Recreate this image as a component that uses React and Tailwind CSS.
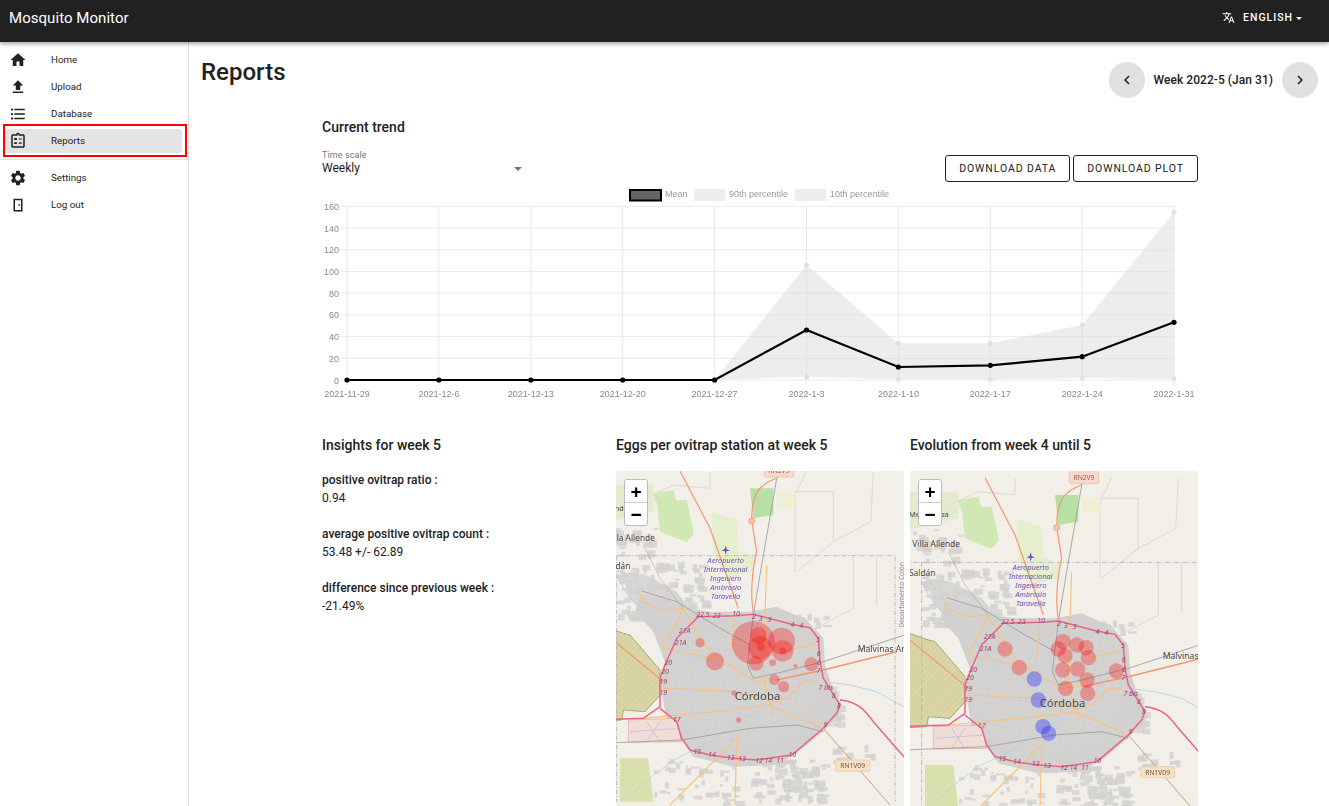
import React from 'react';

const P = {
  home: 'M10 20v-6h4v6h5v-8h3L12 3 2 12h3v8z',
  upload: 'M9 16h6v-6h4l-7-7-7 7h4zm-4 2h14v2H5z',
  list: 'M4 10.5c-.83 0-1.5.67-1.5 1.5s.67 1.5 1.5 1.5 1.5-.67 1.5-1.5-.67-1.5-1.5-1.5zm0-6c-.83 0-1.5.67-1.5 1.5S3.17 7.5 4 7.5 5.5 6.83 5.5 6 4.83 4.5 4 4.5zm0 12c-.83 0-1.5.68-1.5 1.5s.68 1.5 1.5 1.5 1.5-.68 1.5-1.5-.67-1.5-1.5-1.5zM7 19h14v-2H7v2zm0-6h14v-2H7v2zm0-8v2h14V5H7z',
  report: 'M19 3h-4.18C14.4 1.84 13.3 1 12 1s-2.4.84-2.82 2H5c-1.1 0-2 .9-2 2v14c0 1.1.9 2 2 2h14c1.1 0 2-.9 2-2V5c0-1.1-.9-2-2-2zm-7 0c.55 0 1 .45 1 1s-.45 1-1 1-1-.45-1-1 .45-1 1-1zm7 16H5V5h14v14zM13 8.5h4v1.5h-4zM13 14h4v1.5h-4zM7 8h3.5v2.5H7zM7 13.5h3.5V16H7z',
  settings: 'M19.14 12.94c.04-.3.06-.61.06-.94 0-.32-.02-.64-.07-.94l2.03-1.58c.18-.14.23-.41.12-.61l-1.92-3.32c-.12-.22-.37-.29-.59-.22l-2.39.96c-.5-.38-1.03-.7-1.62-.94l-.36-2.54c-.04-.24-.24-.41-.48-.41h-3.84c-.24 0-.43.17-.47.41l-.36 2.54c-.59.24-1.13.57-1.62.94l-2.39-.96c-.22-.08-.47 0-.59.22L2.74 8.87c-.12.21-.08.47.12.61l2.03 1.58c-.05.3-.09.63-.09.94s.02.64.07.94l-2.03 1.58c-.18.14-.23.41-.12.61l1.92 3.32c.12.22.37.29.59.22l2.39-.96c.5.38 1.03.7 1.62.94l.36 2.54c.05.24.24.41.48.41h3.84c.24 0 .44-.17.47-.41l.36-2.54c.59-.24 1.13-.56 1.62-.94l2.39.96c.22.08.47 0 .59-.22l1.92-3.32c.12-.22.07-.47-.12-.61l-2.01-1.58zM12 15.6c-1.98 0-3.6-1.62-3.6-3.6s1.62-3.6 3.6-3.6 3.6 1.62 3.6 3.6-1.62 3.6-3.6 3.6z',
  door: 'M6 3.5h12v17H6zM8 5.5v13h8v-13zM12.5 11h2v2h-2z',
  translate: 'm12.87 15.07-2.54-2.51.03-.03c1.74-1.94 2.98-4.17 3.71-6.53H17V4h-7V2H8v2H1v1.99h11.17C11.5 7.92 10.44 9.75 9 11.35 8.07 10.32 7.3 9.19 6.69 8h-2c.73 1.63 1.73 3.17 2.98 4.56l-5.09 5.02L4 19l5-5 3.11 3.11.76-2.04zM18.5 10h-2L12 22h2l1.12-3h4.75L21 22h2l-4.5-12zm-2.62 7 1.62-4.33L19.12 17h-3.24z',
  left: 'M15.41 7.41 14 6l-6 6 6 6 1.41-1.41L10.83 12z',
  right: 'M10 6 8.59 7.41 13.17 12l-4.58 4.59L10 18l6-6z',
};

function Icon({ d, size = 18, className = '' }) {
  return (
    <svg width={size} height={size} viewBox="0 0 24 24" fill="currentColor" fillRule="evenodd" className={className}>
      <path d={d} />
    </svg>
  );
}

const NAV_TOP = [
  { label: 'Home', icon: P.home },
  { label: 'Upload', icon: P.upload },
  { label: 'Database', icon: P.list },
];
const NAV_BOTTOM = [
  { label: 'Settings', icon: P.settings },
  { label: 'Log out', icon: P.door },
];

function NavRow({ item }) {
  return (
    <div className="flex h-[27px] items-center pl-[9px] text-[#212121]">
      <Icon d={item.icon} />
      <span className="ml-[24px] text-[9.75px] leading-none">{item.label}</span>
    </div>
  );
}

function Sidebar() {
  return (
    <aside className="w-[189px] shrink-0 border-r border-[#e0e0e0] pt-[4px]">
      {NAV_TOP.map((item) => <NavRow key={item.label} item={item} />)}
      <div className="mx-[3px] -mt-[3.5px] -mb-[3px] h-[33px] w-[184px] border-2 border-[#f00] py-[3px]">
        <div className="flex h-[24px] w-[177px] items-center rounded-[3px] bg-[#e4e4e4] text-[#212121]">
          <span className="ml-[4px]"><Icon d={P.report} /></span>
          <span className="ml-[24px] text-[9.75px] leading-none">Reports</span>
        </div>
      </div>
      <div className="mt-[5px] mb-[5px] h-px bg-[#e0e0e0]" />
      {NAV_BOTTOM.map((item) => <NavRow key={item.label} item={item} />)}
    </aside>
  );
}

// chart geometry, in page pixels minus the svg origin (322, 186)
const CX = [25, 116.9, 208.8, 300.7, 392.6, 484.5, 576.4, 668.3, 760.2, 852];
const Y_TICKS = [160, 140, 120, 100, 80, 60, 40, 20, 0];
const X_LABELS = ['2021-11-29', '2021-12-6', '2021-12-13', '2021-12-20', '2021-12-27', '2022-1-3', '2022-1-10', '2022-1-17', '2022-1-24', '2022-1-31'];
const MEAN = [194, 194, 194, 194, 194, 144, 181, 179.3, 170.7, 136.3];
const UPPER = [194, 194, 194, 194, 194, 79, 157.3, 157.3, 139, 26.3];
const LOWER = [194, 194, 194, 194, 194, 190.7, 193.3, 193.3, 192, 192.7];
const yFor = (t) => 194 - t * 1.085;

function TrendChart() {
  const upper = CX.map((x, i) => `${x},${UPPER[i]}`).join(' ');
  const lower = CX.map((x, i) => `${x},${LOWER[i]}`).reverse().join(' ');
  const mean = CX.map((x, i) => `${x},${MEAN[i]}`).join(' ');
  return (
    <svg width="876" height="220" viewBox="0 0 876 220" className="mt-[4px] blur-[0.4px]" style={{ fontFamily: '"Liberation Sans", Arial, sans-serif' }}>
      {/* legend */}
      <rect x="308" y="4" width="31" height="10.5" fill="#666" stroke="#000" strokeWidth="2" />
      <text x="343" y="11" fontSize="9" fill="#999">Mean</text>
      <rect x="372" y="3" width="31" height="12" fill="#eee" />
      <text x="407" y="11" fontSize="9" fill="#999">90th percentile</text>
      <rect x="473" y="3" width="31" height="12" fill="#eee" />
      <text x="508" y="11" fontSize="9" fill="#999">10th percentile</text>
      {/* grid */}
      {Y_TICKS.map((t) => (
        <g key={t}>
          <line x1="18" x2="853" y1={yFor(t)} y2={yFor(t)} stroke="#ececec" />
          <text x="17" y={yFor(t) + 3.5} fontSize="9" fill="#888" textAnchor="end">{t}</text>
        </g>
      ))}
      {CX.map((x, i) => (
        <g key={x}>
          <line x1={x} x2={x} y1="20.4" y2="199" stroke="#e8e8e8" />
          <text x={x} y="211" fontSize="9" fill="#888" textAnchor="middle">{X_LABELS[i]}</text>
        </g>
      ))}
      <polygon points={`${upper} ${lower}`} fill="#dcdcdc" fillOpacity="0.5" />
      {CX.slice(5).map((x, i) => (
        <g key={x} fill="#e0e0e0">
          <circle cx={x} cy={UPPER[i + 5]} r="2.5" />
          <circle cx={x} cy={LOWER[i + 5]} r="2.5" />
        </g>
      ))}
      <polyline points={mean} fill="none" stroke="#000" strokeWidth="2.2" />
      {CX.map((x, i) => <circle key={x} cx={x} cy={MEAN[i]} r="2.6" fill="#000" />)}
    </svg>
  );
}

const ROUTE_LABELS = [
  [270, 457, '22'], [292, 457, '5'], [320, 458, '23'], [378, 454, '10'], [432, 462, '2'], [452, 468, '3'], [478, 472, '3'],
  [547, 487, '4'], [574, 490, '4'], [624, 530, '5'], [626, 572, '6'], [627, 600, '6'], [625, 624, '7'], [647, 674, '7 bis'],
  [671, 698, '8'], [686, 728, '8'], [646, 787, '9'], [547, 875, '10'], [510, 895, '11'], [475, 895, '14'], [447, 894, '12'],
  [396, 888, '13'], [362, 884, '13'], [306, 876, '14'], [262, 867, '15'], [200, 770, '17'], [160, 690, '19'], [160, 658, '19'],
  [165, 626, '20'], [175, 600, '20'], [212, 539, '21A'], [224, 503, '21A'],
];

const AIRPORT_TEXT = [
  [347, 294, 'Aeropuerto'], [347, 321, 'Internacional'], [347, 348, 'Ingeniero'], [347, 375, 'Ambrosio'], [347, 402, 'Taravella'],
];

// scattered built-up blocks round the city, from a small fixed sequence
const BLOCKS = (() => {
  const out = [];
  let seed = 7;
  const next = () => {
    seed = (seed * 1103 + 12345) % 65536;
    return seed / 65536;
  };
  const zones = [
    [20, 290, 260, 170, 90], [250, 900, 130, 110, 22], [420, 880, 220, 130, 80], [130, 880, 120, 120, 18],
    [-30, 170, 190, 100, 24], [540, 440, 110, 60, 14], [640, 650, 60, 130, 14], [660, 840, 130, 50, 14],
  ];
  zones.forEach(([x, y, w, h, n]) => {
    for (let i = 0; i < n; i++) {
      out.push([x + next() * w, y + next() * h, 8 + next() * 22, 6 + next() * 16]);
    }
  });
  return out;
})();

function BaseMap({ uid, shortLabel }) {
  return (
    <g>
      <rect x="-60" y="-30" width="1000" height="1100" fill="#f2efe9" />
      {/* parcels */}
      <g fill="none" stroke="#d2cdc2" strokeWidth="2">
        <path d="M555,320 L555,80 L670,80 L670,230 L560,320 M670,230 L782,170 L790,20 M730,270 L730,430 L560,520 M800,270 L800,420 M560,80 L590,18 M18,140 L190,60 L300,70 M300,70 L300,20" />
      </g>
      {/* greens */}
      <path d="M140,110 L230,105 L252,205 L230,232 L150,200 Z M130,85 L190,75 L200,110 L135,110 Z" fill="#cfe8b4" />
      <path d="M420,70 L490,70 L490,150 L430,160 Z" fill="#b8e0a4" />
      <path d="M305,140 L380,165 L385,255 L440,280 L425,320 L350,340 L310,270 Z" fill="#e6efcd" />
      <path d="M500,80 L555,80 L555,125 L500,125 Z" fill="#eef0d4" />
      <path d="M30,880 L115,880 L130,1010 L30,1010 Z" fill="#d9e0ae" />
      <path d="M-40,60 L130,60 L130,140 L-40,180 Z" fill="#dfe8c0" fillOpacity="0.7" />
      {/* built up area */}
      <g fill="#d2d1cf">
        <path d="M90,390 L150,395 L230,430 L300,440 L420,440 L500,425 L590,465 L640,520 L645,600 L665,660 L695,720 L645,795 L560,865 L500,900 L370,905 L250,875 L215,825 L170,765 L150,650 L165,590 L130,500 L75,440 Z" />
        <path d="M30,320 L110,330 L200,380 L250,440 L180,480 L120,470 L60,400 Z" fillOpacity="0.8" />
        {BLOCKS.map(([x, y, w, h]) => <rect key={`${x}-${y}`} x={x} y={y} width={w} height={h} fillOpacity="0.8" />)}
      </g>
      <defs>
        <pattern id={`streets-${uid}`} width="20" height="20" patternUnits="userSpaceOnUse" patternTransform="rotate(12)">
          <path d="M0,0 H20 M0,0 V20" stroke="#dedcd9" strokeWidth="1.4" fill="none" />
        </pattern>
        <pattern id={`hatch-${uid}`} width="12" height="12" patternUnits="userSpaceOnUse" patternTransform="rotate(45)">
          <path d="M0,0 V12" stroke="#e4d8b4" strokeWidth="4" />
        </pattern>
      </defs>
      <path d="M170,590 L300,500 L600,500 L640,640 L560,820 L300,850 L200,760 Z" fill={`url(#streets-${uid})`} />
      {/* protected areas */}
      <path d="M-60,470 L40,505 L60,510 L150,615 L150,690 L105,740 L40,735 L35,765 L-60,770 Z" fill="#d6d2a2" stroke="#9aab6a" strokeWidth="3" />
      <path d="M-60,470 L40,505 L60,510 L150,615 L150,690 L105,740 L40,735 L35,765 L-60,770 Z" fill={`url(#hatch-${uid})`} />
      <path d="M55,765 L200,760 L215,830 L55,832 Z" fill="#f1dcd6" stroke="#e0a8a0" strokeWidth="2" />
      <path d="M110,770 L150,830 M150,770 L110,830 M60,800 L210,790" stroke="#aebcdc" strokeWidth="2" fill="none" />
      {/* rivers */}
      <g fill="none" stroke="#a9d3e6" strokeWidth="2.5">
        <path d="M18,330 L60,400 L110,440 L160,490 L210,540 L255,590" />
        <path d="M200,880 L300,830 L380,770 L450,740" />
        <path d="M640,650 L720,660 L800,680 L880,725" />
        <path d="M50,1000 L130,930 L200,880" />
      </g>
      {/* admin boundary */}
      <path d="M-60,272 H855 V1010 M20,272 V1010" fill="none" stroke="#bba8c4" strokeWidth="2.5" strokeDasharray="14 5 3 5" />
      {/* rails */}
      <g fill="none" stroke="#9b9b9b" strokeWidth="2.5">
        <path d="M502,30 L455,300 L430,450 L412,600 L430,640 L500,625 L640,590 L890,508" />
        <path d="M95,378 L200,410 L330,490 L420,540" />
        <path d="M-30,835 L215,825 L420,790 L560,780 L640,800" />
        <path d="M100,240 L150,340 L220,430" strokeWidth="1.5" />
      </g>
      {/* roads */}
      <g fill="none" stroke="#f8c27e" strokeWidth="3.5">
        <path d="M90,385 L95,410 L160,435 L220,430 L270,520 L310,570 L390,620 L440,650 L520,640" />
        <path d="M470,300 L465,450 L460,640 L490,750" />
        <path d="M160,670 L370,680 L490,710 L530,700 L580,650 L620,650" />
        <path d="M100,760 L370,735 L480,720 L640,790" />
        <path d="M180,1020 L380,820 L375,1020" />
        <path d="M520,560 L620,535 M220,430 L160,550 L310,580 M375,460 L365,560" />
      </g>
      <path d="M640,790 L840,1020" fill="none" stroke="#c8a578" strokeWidth="3" />
      <g fill="none" stroke="#f49472" strokeWidth="3.5">
        <path d="M210,18 L300,190 L385,430" />
        <path d="M498,40 C450,60 425,80 425,165 L440,260 C425,320 420,400 432,450" />
        <path d="M-40,485 L100,600 L160,650" />
        <path d="M500,645 L640,615 L860,560" strokeWidth="4.5" />
      </g>
      <path d="M-40,765 L100,760 L150,725 L150,640 L165,600 L200,520 L265,455 L380,452 L430,448 L545,478 L600,488 L625,520 L630,590 L640,640 L690,720 L680,745 L640,790 L545,870 L440,885 L370,880 L300,870 L240,855 L215,820 L200,770 L150,730 M690,705 C740,710 760,730 790,770 L890,885" fill="none" stroke="#e8638a" strokeWidth="4.5" />
      <circle cx="425" cy="168" r="9" fill="#f9c8a0" stroke="#f49472" strokeWidth="2.5" />
      {/* labels */}
      <g fontFamily='"Noto Sans", sans-serif' fontSize="21" fontStyle="italic" fill="#a8405c" textAnchor="middle">
        {ROUTE_LABELS.map(([x, y, t]) => <text key={`${x}-${y}`} x={x} y={y}>{t}</text>)}
      </g>
      <path d="M347,242 L350,252 L360,258 L350,258 L347,270 L344,258 L334,258 L344,252 Z" fill="#6f52b8" />
      <g fontFamily='"Noto Sans", sans-serif' fontSize="22" fontStyle="italic" fill="#6f52b8" textAnchor="middle">
        {AIRPORT_TEXT.map(([x, y, t]) => <text key={t} x={x} y={y}>{t}</text>)}
      </g>
      <g fontFamily='"Noto Sans", sans-serif' fill="#4a4a4a">
        <text x="-18" y="137" fontSize="22">Mendiolaza</text>
        <text x="-8" y="227" fontSize="25">Villa Allende</text>
        <text x="-18" y="312" fontSize="25">Saldán</text>
        <text x="743" y="562" fontSize="26">{shortLabel ? 'Malvinas' : 'Malvinas Argüello'}</text>
        <text x="374" y="705" fontSize="34">Córdoba</text>
      </g>
      <text transform="translate(882,488) rotate(-90)" fontFamily='"Noto Sans", sans-serif' fontSize="20" fill="#a58cb0">Departamento Colón</text>
      <g fontFamily='"Noto Sans", sans-serif' fontSize="20" fill="#6b5a44" textAnchor="middle">
        <rect x="463" y="0" width="88" height="36" rx="4" fill="#f6d9cb" stroke="#e8b8a4" strokeWidth="2" />
        <text x="507" y="25" fill="#a05a48">RN2V9</text>
        <rect x="677" y="885" width="102" height="34" rx="4" fill="#f6e0c4" stroke="#e8c498" strokeWidth="2" />
        <text x="728" y="909">RN1V09</text>
      </g>
    </g>
  );
}

const CIRCLES_ONE = [
  [430, 533, 65, 'r'], [445, 512, 25, 'r'], [450, 548, 35, 'r'], [515, 528, 40, 'r'], [518, 558, 32, 'r'], [438, 595, 22, 'r'],
  [452, 545, 12, 'r'], [518, 558, 10, 'r'], [270, 533, 14, 'r'], [315, 589, 27, 'r'], [604, 598, 21, 'r'], [493, 644, 16, 'r'],
  [521, 665, 17, 'r'], [488, 593, 10, 'r'], [372, 684, 8, 'r'], [386, 765, 8, 'r'], [556, 603, 6, 'r'],
];
const CIRCLES_TWO = [
  [474, 530, 23, 'r'], [460, 552, 23, 'r'], [480, 572, 23, 'r'], [515, 540, 23, 'r'], [543, 548, 23, 'r'], [550, 578, 23, 'r'],
  [473, 615, 23, 'r'], [518, 612, 23, 'r'], [546, 645, 23, 'r'], [548, 685, 23, 'r'], [482, 670, 23, 'r'], [634, 618, 23, 'r'],
  [300, 552, 23, 'r'], [343, 608, 23, 'r'], [388, 642, 23, 'b'], [400, 705, 23, 'b'], [414, 785, 23, 'b'], [431, 805, 23, 'b'],
];

function MapPanel({ uid, viewBox, shift, circles, shortLabel }) {
  return (
    <div className="relative h-[335px] w-[288px] overflow-hidden">
      <svg width="288" height="335" viewBox={viewBox} className="block blur-[0.6px]">
        <g transform={`translate(${shift})`}>
          <BaseMap uid={uid} shortLabel={shortLabel} />
        </g>
        {circles.map(([x, y, r, c]) => (
          <circle key={`${x}-${y}-${r}`} cx={x} cy={y} r={r} fill={c === 'r' ? '#ff0000' : '#2a2aff'} fillOpacity={c === 'r' ? 0.3 : 0.38} />
        ))}
      </svg>
      <div className="absolute left-[8px] top-[8px] flex w-[24px] flex-col overflow-hidden rounded-[3px] border border-[#bdbdbd] bg-white text-black">
        <div className="flex h-[23px] items-center justify-center border-b border-[#ccc] font-['Liberation_Sans'] text-[19px] font-bold leading-none">+</div>
        <div className="flex h-[22px] items-center justify-center font-['Liberation_Sans'] text-[19px] font-bold leading-none">−</div>
      </div>
    </div>
  );
}

const INSIGHTS = [
  { label: 'positive ovitrap ratio :', value: '0.94' },
  { label: 'average positive ovitrap count :', value: '53.48 +/- 62.89' },
  { label: 'difference since previous week :', value: '-21.49%' },
];

function OutlineButton({ children }) {
  return (
    <button className="h-[27px] rounded-[3px] border border-[#212121] px-[13px] text-[10.5px] font-normal tracking-[0.9px] text-[#212121]">
      {children}
    </button>
  );
}

export default function App() {
  return (
    <div className="flex h-[806px] flex-col overflow-hidden bg-white font-['Roboto',sans-serif] text-[#212121]">
      {/* Header */}
      <header className="relative z-10 flex h-[42px] shrink-0 items-center justify-between bg-[#212121] pb-[6px] pl-[9px] pr-[27px] text-white shadow-[0_2px_4px_rgba(0,0,0,0.35)]">
        <span className="text-[15px] tracking-[0.05px]">Mosquito Monitor</span>
        <div className="flex items-center">
          <Icon d={P.translate} size={13} className="-mt-[1px]" />
          <span className="ml-[8px] text-[10.5px] font-medium tracking-[1px]">ENGLISH</span>
          <span className="ml-[3px] h-0 w-0 border-x-[3.5px] border-t-[3.5px] border-x-transparent border-t-white" />
        </div>
      </header>

      <div className="flex min-h-0 flex-1">
        <Sidebar />

        {/* Content */}
        <main className="min-w-0 flex-1 pl-[12px] pr-[11px]">
          <div className="flex justify-between">
            <h1 className="mt-[15px] text-[24px] font-medium leading-[30px]">Reports</h1>
            <div className="mt-[20px] flex items-center">
              <div className="flex h-[36px] w-[36px] items-center justify-center rounded-full bg-[#e0e0e0]"><Icon d={P.left} /></div>
              <span className="mx-[9px] text-[12px] font-medium tracking-[0.05px]">Week 2022-5 (Jan 31)</span>
              <div className="flex h-[36px] w-[36px] items-center justify-center rounded-full bg-[#e0e0e0]"><Icon d={P.right} /></div>
            </div>
          </div>

          <div className="ml-[121px] w-[876px]">
            <h2 className="mt-[19px] text-[14px] font-medium leading-[20px]">Current trend</h2>
            <div className="mt-[13px] flex items-start justify-between">
              <div className="w-[203px]">
                <div className="text-[9px] leading-[11px] tracking-[0.1px] text-[#757575]">Time scale</div>
                <div className="flex items-center justify-between pr-[3px] text-[12px] leading-[15px]">
                  <span>Weekly</span>
                  <span className="mt-px h-0 w-0 border-x-[4px] border-t-[4px] border-x-transparent border-t-[#757575]" />
                </div>
              </div>
              <div className="mt-[5px] flex gap-[3px]">
                <OutlineButton>DOWNLOAD DATA</OutlineButton>
                <OutlineButton>DOWNLOAD PLOT</OutlineButton>
              </div>
            </div>

            <TrendChart />

            <div className="mt-[29px] grid grid-cols-[294px_294px_288px]">
              <div>
                <h2 className="text-[14px] font-medium leading-[20px]">Insights for week 5</h2>
                <div className="mt-[16px] flex flex-col gap-[18px] text-[12px] leading-[18px]">
                  {INSIGHTS.map((row) => (
                    <div key={row.label}>
                      <div className="font-medium">{row.label}</div>
                      <div>{row.value}</div>
                    </div>
                  ))}
                </div>
              </div>
              <div>
                <h2 className="text-[14px] font-medium leading-[20px]">Eggs per ovitrap station at week 5</h2>
                <div className="mt-[16px]">
                  <MapPanel uid="a" viewBox="18 18 864 1005" shift="0,0" circles={CIRCLES_ONE} />
                </div>
              </div>
              <div>
                <h2 className="text-[14px] font-medium leading-[20px]">Evolution from week 4 until 5</h2>
                <div className="mt-[16px]">
                  <MapPanel uid="b" viewBox="15 18 864 1005" shift="30,20" circles={CIRCLES_TWO} shortLabel />
                </div>
              </div>
            </div>
          </div>
        </main>
      </div>
    </div>
  );
}
